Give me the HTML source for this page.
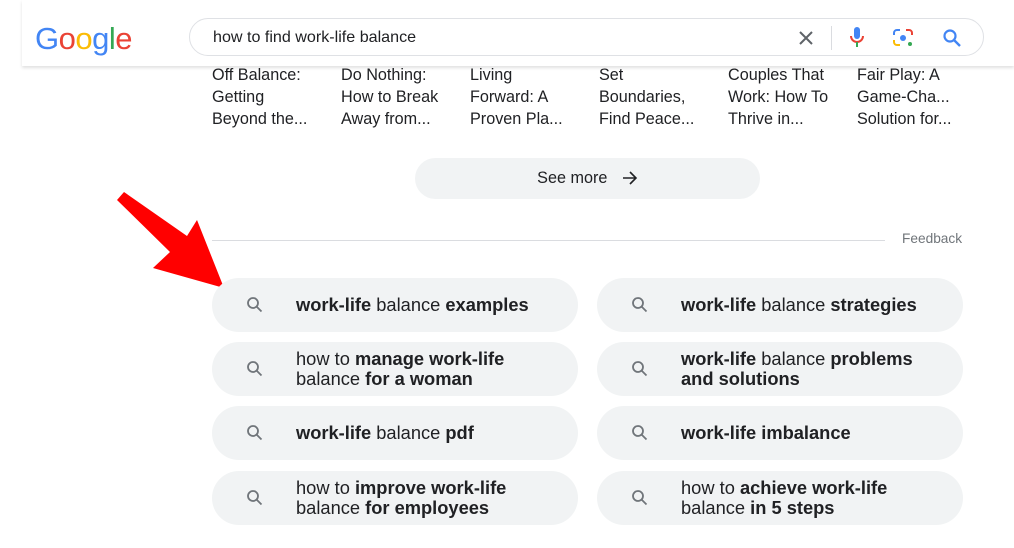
<!DOCTYPE html>
<html><head><meta charset="utf-8"><style>
body{margin:0;width:1014px;height:548px;background:#fff;font-family:"Liberation Sans",Arial,sans-serif;position:relative;overflow:hidden;color:#202124}
.abs{position:absolute}
.hdr{left:22px;top:0;width:992px;height:66px;background:#fff;box-shadow:0 2px 3px rgba(0,0,0,.12)}
.logo{left:35px;top:21px;font-size:31px;letter-spacing:-0.5px}
.sb{left:189px;top:18px;width:795px;height:38px;border:1px solid #dfe1e5;border-radius:20px;box-sizing:border-box}
.q{left:213px;top:28px;font-size:16.1px;color:#202124}
.bk{font-size:16.2px;line-height:22px;color:#202124;top:64px}
.see{left:415px;top:158px;width:345px;height:41px;border-radius:21px;background:#f1f3f4;font-size:16.2px;text-align:center;line-height:41px}
.pill{height:54px;width:366px;border-radius:27px;background:#f1f3f4;box-sizing:border-box;padding-left:84px;display:flex;align-items:center;font-size:18.3px;line-height:20px;color:#202124}
.pill svg{position:absolute;left:34px;top:18px}
b{font-weight:bold}
</style></head><body>
<div class="abs hdr"></div>
<div class="abs logo"><span style="color:#4285f4">G</span><span style="color:#ea4335">o</span><span style="color:#fbbc05">o</span><span style="color:#4285f4">g</span><span style="color:#34a853">l</span><span style="color:#ea4335">e</span></div>
<div class="abs sb"></div>
<div class="abs q">how to find work-life balance</div>
<svg class="abs" style="left:797px;top:29px" width="18" height="18" viewBox="0 0 18 18"><path d="M3 3L15 15M15 3L3 15" stroke="#5f6368" stroke-width="2"/></svg>
<div class="abs" style="left:831px;top:26px;width:1px;height:24px;background:#dadce0"></div>
<svg class="abs" style="left:848px;top:26px" width="18" height="24" viewBox="0 0 18 24"><rect x="6" y="1" width="6" height="12" rx="3" fill="#4285f4"/><path d="M3 10a6 6 0 0 0 12 0" stroke="#ea4335" stroke-width="2" fill="none"/><path d="M9 16v5" stroke="#34a853" stroke-width="2"/></svg>
<svg class="abs" style="left:892px;top:28px" width="22" height="20" viewBox="0 0 22 20"><path d="M2 7V5a3 3 0 0 1 3-3h3" stroke="#4285f4" stroke-width="2" fill="none"/><path d="M14 2h3a3 3 0 0 1 3 3v2" stroke="#ea4335" stroke-width="2" fill="none"/><path d="M2 12v2a3 3 0 0 0 3 3h3" stroke="#fbbc05" stroke-width="2" fill="none"/><circle cx="11" cy="10" r="3" fill="#4285f4"/><circle cx="18" cy="16" r="2" fill="#34a853"/></svg>
<svg class="abs" style="left:942px;top:28px" width="20" height="20" viewBox="0 0 20 20"><circle cx="8" cy="8" r="5.5" stroke="#4285f4" stroke-width="2.2" fill="none"/><path d="M12 12l6 6" stroke="#4285f4" stroke-width="2.4"/></svg>

<div class="abs bk" style="left:212px">Off Balance:<br>Getting<br>Beyond the...</div>
<div class="abs bk" style="left:341px">Do Nothing:<br>How to Break<br>Away from...</div>
<div class="abs bk" style="left:470px">Living<br>Forward: A<br>Proven Pla...</div>
<div class="abs bk" style="left:599px">Set<br>Boundaries,<br>Find Peace...</div>
<div class="abs bk" style="left:728px">Couples That<br>Work: How To<br>Thrive in...</div>
<div class="abs bk" style="left:857px">Fair Play: A<br>Game-Cha...<br>Solution for...</div>

<div class="abs see">See more <svg style="vertical-align:-3px;margin-left:10px" width="16" height="16" viewBox="0 0 16 16"><path d="M1 8h13M8 2l6 6-6 6" stroke="#202124" stroke-width="1.6" fill="none"/></svg></div>

<div class="abs" style="left:212px;top:240px;width:673px;height:1px;background:#dadce0"></div>
<div class="abs" style="left:902px;top:231px;font-size:13.7px;color:#70757a">Feedback</div>

<svg class="abs" style="left:0;top:0" width="300" height="300"><polygon points="117,200 124,192 187,236 197,220 224,288 153,268 170,252" fill="#ff0000"/></svg>

<div class="abs pill" style="left:212px;top:278px"><svg width="18" height="18" viewBox="0 0 18 18"><circle cx="7" cy="7" r="5" stroke="#70757a" stroke-width="1.8" fill="none"/><path d="M10.5 10.5l5 5" stroke="#70757a" stroke-width="1.8"/></svg><span><b>work-life</b> balance <b>examples</b></span></div>
<div class="abs pill" style="left:212px;top:342px"><svg width="18" height="18" viewBox="0 0 18 18"><circle cx="7" cy="7" r="5" stroke="#70757a" stroke-width="1.8" fill="none"/><path d="M10.5 10.5l5 5" stroke="#70757a" stroke-width="1.8"/></svg><span>how to <b>manage work-life</b><br>balance <b>for a woman</b></span></div>
<div class="abs pill" style="left:212px;top:406px"><svg width="18" height="18" viewBox="0 0 18 18"><circle cx="7" cy="7" r="5" stroke="#70757a" stroke-width="1.8" fill="none"/><path d="M10.5 10.5l5 5" stroke="#70757a" stroke-width="1.8"/></svg><span><b>work-life</b> balance <b>pdf</b></span></div>
<div class="abs pill" style="left:212px;top:471px"><svg width="18" height="18" viewBox="0 0 18 18"><circle cx="7" cy="7" r="5" stroke="#70757a" stroke-width="1.8" fill="none"/><path d="M10.5 10.5l5 5" stroke="#70757a" stroke-width="1.8"/></svg><span>how to <b>improve work-life</b><br>balance <b>for employees</b></span></div>

<div class="abs pill" style="left:597px;top:278px"><svg width="18" height="18" viewBox="0 0 18 18"><circle cx="7" cy="7" r="5" stroke="#70757a" stroke-width="1.8" fill="none"/><path d="M10.5 10.5l5 5" stroke="#70757a" stroke-width="1.8"/></svg><span><b>work-life</b> balance <b>strategies</b></span></div>
<div class="abs pill" style="left:597px;top:342px"><svg width="18" height="18" viewBox="0 0 18 18"><circle cx="7" cy="7" r="5" stroke="#70757a" stroke-width="1.8" fill="none"/><path d="M10.5 10.5l5 5" stroke="#70757a" stroke-width="1.8"/></svg><span><b>work-life</b> balance <b>problems<br>and solutions</b></span></div>
<div class="abs pill" style="left:597px;top:406px"><svg width="18" height="18" viewBox="0 0 18 18"><circle cx="7" cy="7" r="5" stroke="#70757a" stroke-width="1.8" fill="none"/><path d="M10.5 10.5l5 5" stroke="#70757a" stroke-width="1.8"/></svg><span><b>work-life imbalance</b></span></div>
<div class="abs pill" style="left:597px;top:471px"><svg width="18" height="18" viewBox="0 0 18 18"><circle cx="7" cy="7" r="5" stroke="#70757a" stroke-width="1.8" fill="none"/><path d="M10.5 10.5l5 5" stroke="#70757a" stroke-width="1.8"/></svg><span>how to <b>achieve work-life</b><br>balance <b>in 5 steps</b></span></div>
</body></html>
